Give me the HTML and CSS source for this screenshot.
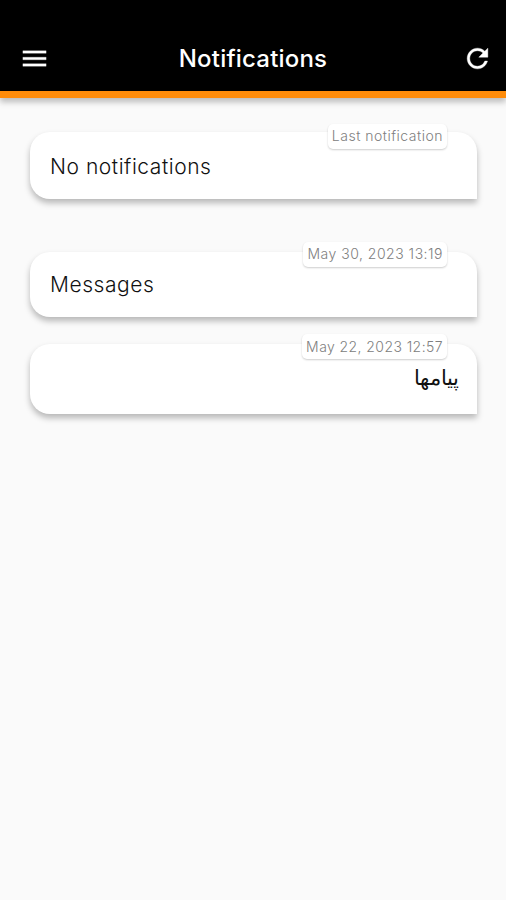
FILE: index.html
```html
<!DOCTYPE html>
<html lang="en">
<head>
  <meta charset="UTF-8">
  <title>Notifications</title>
  <link rel="stylesheet" href="styles.css">
</head>
<body>
  <header class="topbar">
    <button class="icon-btn" aria-label="Menu">
      <svg width="31" height="31" viewBox="0 0 24 24"><path fill="#fff" stroke="#fff" stroke-width=".2" d="M3 18h18v-2H3v2zm0-5h18v-2H3v2zm0-7v2h18V6H3z"/></svg>
    </button>
    <h1>Notifications</h1>
    <button class="icon-btn" aria-label="Refresh">
      <svg width="31" height="31" viewBox="0 0 24 24"><path fill="#fff" stroke="#fff" stroke-width=".3" d="M17.65 6.35C16.2 4.9 14.21 4 12 4c-4.42 0-7.99 3.58-7.99 8s3.57 8 7.99 8c3.73 0 6.84-2.55 7.73-6h-2.08c-.82 2.33-3.04 4-5.65 4-3.31 0-6-2.69-6-6s2.69-6 6-6c1.66 0 3.14.69 4.22 1.78L13 11h7V4l-2.35 2.35z"/></svg>
    </button>
  </header>

  <main class="list">
    <div class="card latest">
      <span class="badge">Last notification</span>
      <p>No notifications</p>
    </div>
    <div class="card">
      <span class="badge date">May 30, 2023 13:19</span>
      <p>Messages</p>
    </div>
    <div class="card persian">
      <span class="badge date">May 22, 2023 12:57</span>
      <p lang="fa" dir="rtl">پیامها</p>
    </div>
  </main>
</body>
</html>
```

FILE: styles.css
```css
body {
  margin: 0;
  min-height: 100vh;
  background: #fafafa;
  font-family: Inter, "DejaVu Sans", sans-serif;
  color: #111;
}
.topbar {
  box-sizing: border-box;
  height: 98px;
  padding: 26px 13px 0 19px;
  display: grid;
  grid-template-columns: 31px 1fr 31px;
  align-items: start;
  background: #000;
  border-bottom: 7px solid #ff8c0a;
  box-shadow: 0 4px 6px rgba(0,0,0,0.25);
}
.topbar h1 {
  margin: 0;
  padding: 1px 6px 0 0;
  font-size: 24px;
  line-height: 64px;
  font-weight: 550;
  letter-spacing: 0.2px;
  text-align: center;
  color: #fff;
}
.icon-btn {
  width: 31px;
  height: 64px;
  padding: 0;
  border: none;
  background: none;
  display: flex;
  align-items: center;
}
.list {
  padding: 34px 29px 0 30px;
}
.card {
  position: relative;
  box-sizing: border-box;
  height: 65px;
  margin-bottom: 27px;
  padding: 0 18px 0 20px;
  background: #fff;
  border-radius: 20px 20px 0 20px;
  box-shadow: 0 4px 6px rgba(0,0,0,0.27);
}
.card.latest {
  height: 67px;
  margin-bottom: 53px;
}
.card p {
  margin: 0;
  font-size: 21px;
  font-weight: 350;
  line-height: 66px;
  letter-spacing: 0.55px;
}
.card.latest p {
  line-height: 70px;
}
.card.persian {
  height: 70px;
}
.card.persian p {
  font-size: 20.5px;
  line-height: 68px;
  letter-spacing: 0;
}
.badge {
  position: absolute;
  top: -8px;
  right: 30px;
  box-sizing: border-box;
  height: 25px;
  padding: 0 4px;
  border-radius: 5px;
  background: #fff;
  box-shadow: 0 1px 2px rgba(0,0,0,0.2);
  font-size: 14px;
  font-weight: 300;
  line-height: 24px;
  letter-spacing: 0.5px;
  color: #808080;
  white-space: nowrap;
}
.badge.date {
  top: -10px;
}
.card.persian .badge {
  line-height: 25px;
  letter-spacing: 0.42px;
}
```
